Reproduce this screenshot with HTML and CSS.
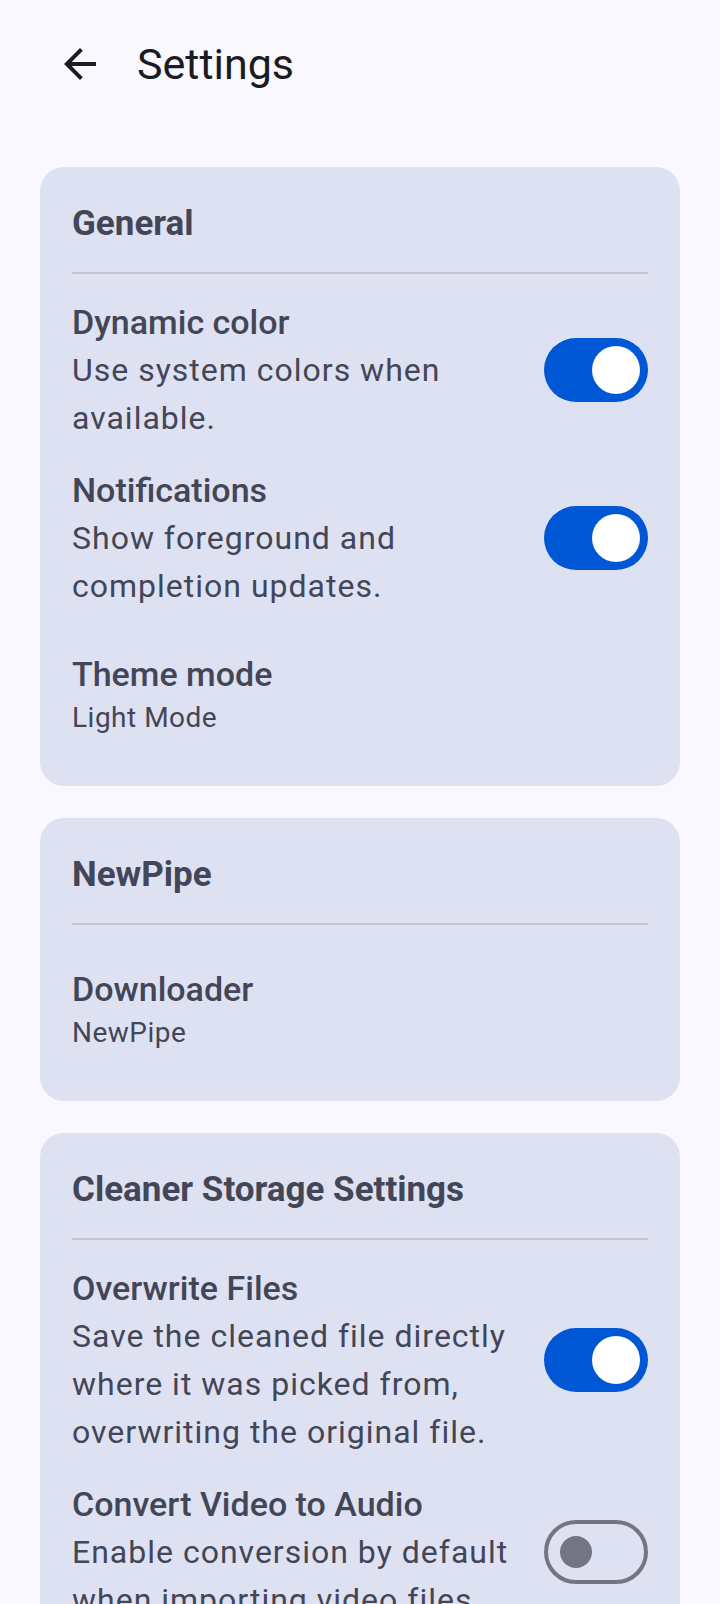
FILE: index.html
```html
<!DOCTYPE html>
<html lang="en">
<head>
    <meta charset="UTF-8">
    <meta name="viewport" content="width=device-width, initial-scale=1.0">
    <title>Settings</title>
    <link rel="stylesheet" href="styles.css">
</head>
<body>
    <header class="topbar">
        <button class="back-btn" aria-label="Back">
            <svg width="48" height="48" viewBox="0 0 24 24">
                <path d="M20 11H7.83l5.59-5.59L12 4l-8 8 8 8 1.41-1.41L7.83 13H20v-2z" fill="#1b1c22"/>
            </svg>
        </button>
        <h1>Settings</h1>
    </header>

    <main class="content">
        <!-- General -->
        <section class="card">
            <h2 class="card-title">General</h2>
            <div class="divider"></div>
            <div class="rows">
                <div class="setting">
                    <div class="setting-text">
                        <div class="setting-name">Dynamic color</div>
                        <div class="setting-desc">Use system colors when available.</div>
                    </div>
                    <span class="switch on"><span class="knob"></span></span>
                </div>
                <div class="setting">
                    <div class="setting-text">
                        <div class="setting-name">Notifications</div>
                        <div class="setting-desc">Show foreground and completion updates.</div>
                    </div>
                    <span class="switch on"><span class="knob"></span></span>
                </div>
                <div class="setting clickable">
                    <div class="setting-text">
                        <div class="setting-name">Theme mode</div>
                        <div class="setting-value">Light Mode</div>
                    </div>
                </div>
            </div>
        </section>

        <!-- NewPipe -->
        <section class="card">
            <h2 class="card-title">NewPipe</h2>
            <div class="divider"></div>
            <div class="rows">
                <div class="setting clickable">
                    <div class="setting-text">
                        <div class="setting-name">Downloader</div>
                        <div class="setting-value">NewPipe</div>
                    </div>
                </div>
            </div>
        </section>

        <!-- Cleaner -->
        <section class="card">
            <h2 class="card-title">Cleaner Storage Settings</h2>
            <div class="divider"></div>
            <div class="rows">
                <div class="setting">
                    <div class="setting-text">
                        <div class="setting-name">Overwrite Files</div>
                        <div class="setting-desc">Save the cleaned file directly where it was picked from, overwriting the original file.</div>
                    </div>
                    <span class="switch on"><span class="knob"></span></span>
                </div>
                <div class="setting">
                    <div class="setting-text">
                        <div class="setting-name">Convert Video to Audio</div>
                        <div class="setting-desc">Enable conversion by default when importing video files.</div>
                    </div>
                    <span class="switch"><span class="knob"></span></span>
                </div>
            </div>
        </section>
    </main>
</body>
</html>
```

FILE: styles.css
```css
body, h1, h2 {
    margin: 0;
    padding: 0;
}

body {
    font-family: Roboto, "Liberation Sans", sans-serif;
    background-color: #f8f8fe;
    color: #434656;
}

.topbar {
    height: 128px;
    display: flex;
    align-items: center;
    padding-left: 56px;
}

.back-btn {
    width: 48px;
    height: 48px;
    padding: 0;
    border: none;
    background: none;
    display: flex;
}

.topbar h1 {
    margin-left: 33px;
    font-size: 43px;
    font-weight: 400;
    color: #1b1c22;
}

.content {
    padding: 39px 40px 40px;
    display: flex;
    flex-direction: column;
    gap: 32px;
}

.card {
    background-color: #dee1f2;
    border-radius: 24px;
    padding: 33px 32px 32px;
}

.card-title {
    font-size: 35px;
    font-weight: 700;
    line-height: 48px;
}

.divider {
    height: 2px;
    background-color: #c3c5d5;
    margin: 24px 0;
}

.rows {
    display: flex;
    flex-direction: column;
    gap: 24px;
}

.setting {
    display: flex;
    align-items: center;
    gap: 24px;
}

.setting.clickable {
    padding: 16px 0;
}

.setting-text {
    flex: 1;
}

.setting-name {
    font-size: 34px;
    font-weight: 500;
    line-height: 48px;
}

.setting-desc {
    font-size: 32px;
    letter-spacing: 1px;
    line-height: 48px;
}

.setting-value {
    font-size: 28px;
    letter-spacing: 0.5px;
    line-height: 40px;
}

/* switches */
.switch {
    flex: none;
    box-sizing: border-box;
    width: 104px;
    height: 64px;
    border-radius: 32px;
    border: 4px solid #737584;
    display: flex;
    align-items: center;
    padding-left: 12px;
}

.switch .knob {
    width: 32px;
    height: 32px;
    border-radius: 50%;
    background-color: #737584;
}

.switch.on {
    border: none;
    background-color: #0057d6;
    justify-content: flex-end;
    padding: 0 8px 0 0;
}

.switch.on .knob {
    width: 48px;
    height: 48px;
    background-color: #fff;
}
```
